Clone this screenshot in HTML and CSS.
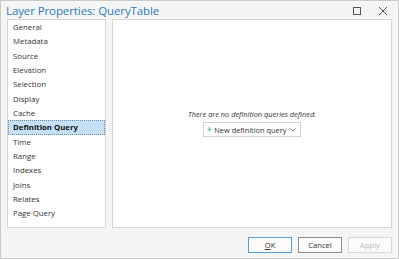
FILE: index.html
```html
<!DOCTYPE html>
<html lang="en">
<head>
    <meta charset="UTF-8">
    <title>Layer Properties: QueryTable</title>
    <link rel="stylesheet" href="styles.css">
</head>
<body>
    <div class="dialog">
        <div class="titlebar">
            <span class="title">Layer Properties: QueryTable</span>
            <div class="window-controls">
                <svg class="ctl" width="10" height="10" viewBox="0 0 10 10"><rect x="1.5" y="1.5" width="7" height="7" fill="none" stroke="#555" stroke-width="1"/></svg>
                <svg class="ctl" width="10" height="10" viewBox="0 0 10 10"><path d="M1 1 L9 9 M9 1 L1 9" stroke="#555" stroke-width="1"/></svg>
            </div>
        </div>

        <div class="content">
            <ul class="nav">
                <li>General</li>
                <li>Metadata</li>
                <li>Source</li>
                <li>Elevation</li>
                <li>Selection</li>
                <li>Display</li>
                <li>Cache</li>
                <li class="active">Definition Query</li>
                <li>Time</li>
                <li>Range</li>
                <li>Indexes</li>
                <li>Joins</li>
                <li>Relates</li>
                <li>Page Query</li>
            </ul>

            <div class="page">
                <p class="empty-text">There are no definition queries defined.</p>
                <button class="new-query">
                    <span class="plus">+</span>
                    New definition query
                    <svg class="caret" width="6" height="4" viewBox="0 0 6 4"><path d="M0.5 0.5 L3 3 L5.5 0.5" fill="none" stroke="#777" stroke-width="1"/></svg>
                </button>
            </div>
        </div>

        <div class="footer">
            <button class="btn btn-ok"><u>O</u>K</button>
            <button class="btn btn-cancel">Cancel</button>
            <button class="btn btn-apply" disabled>Apply</button>
        </div>
    </div>
</body>
</html>
```

FILE: styles.css
```css
:root {
    --bg: #f4f5f4;
    --border: #d4d6d4;
    --text: #2b2b2b;
    --title: #2e7bbf;
    --select: #c5e0f7;
}

* {
    margin: 0;
    padding: 0;
    box-sizing: border-box;
}

body {
    font-family: "Open Sans", "Noto Sans", sans-serif;
    color: var(--text);
    background: #fff;
}

.dialog {
    width: 399px;
    height: 259px;
    background: var(--bg);
    border: 1px solid #c9cbc9;
    display: flex;
    flex-direction: column;
}

.titlebar {
    height: 18px;
    display: flex;
    align-items: center;
    justify-content: space-between;
    padding: 0 6px 0 5px;
}

.title {
    font-size: 11.5px;
    color: var(--title);
    letter-spacing: -0.1px;
    line-height: 16px;
    margin-top: 1px;
}

.window-controls {
    display: flex;
    gap: 16px;
    margin-top: 2px;
    padding-right: 4px;
}

.ctl {
    display: block;
}

.content {
    display: flex;
    gap: 6px;
    padding: 0 6px;
    height: 209px;
}

.nav {
    list-style: none;
    width: 99px;
    background: #fff;
    border: 1px solid var(--border);
    padding-top: 0;
}

.nav li {
    font-size: 7.8px;
    height: 14.35px;
    line-height: 14.35px;
    padding-left: 5px;
    color: #333;
}

.nav li.active {
    background: var(--select);
    outline: 1px dotted #6a8aa6;
    outline-offset: -1px;
    font-weight: 700;
    color: #111;
}

.page {
    flex: 1;
    background: #fff;
    border: 1px solid var(--border);
    display: flex;
    flex-direction: column;
    align-items: center;
    padding-top: 88px;
}

.empty-text {
    font-size: 7.4px;
    font-style: italic;
    color: #333;
    line-height: 12px;
}

.new-query {
    margin-top: 2px;
    height: 15px;
    padding: 0 4px 0 3px;
    display: flex;
    align-items: center;
    gap: 2px;
    background: #fff;
    border: 1px solid #d2d2d2;
    font-family: inherit;
    font-size: 7.4px;
    color: #333;
}

.plus {
    color: #3a9a3a;
    font-size: 10px;
    line-height: 10px;
    margin-top: -1px;
}

.caret {
    margin-left: 2px;
}

.footer {
    display: flex;
    justify-content: flex-end;
    gap: 6px;
    padding: 9px 6px 0;
}

.btn {
    width: 44px;
    height: 16px;
    font-family: inherit;
    font-size: 7.6px;
    background: #fbfbfb;
    border: 1px solid #adadad;
    color: #333;
}

.btn-ok {
    border-color: #5aa0d8;
}

.btn-cancel {
    border-color: #8e8e8e;
}

.btn-apply {
    border-color: #d8d8d8;
    color: #b8b8b8;
}
```
